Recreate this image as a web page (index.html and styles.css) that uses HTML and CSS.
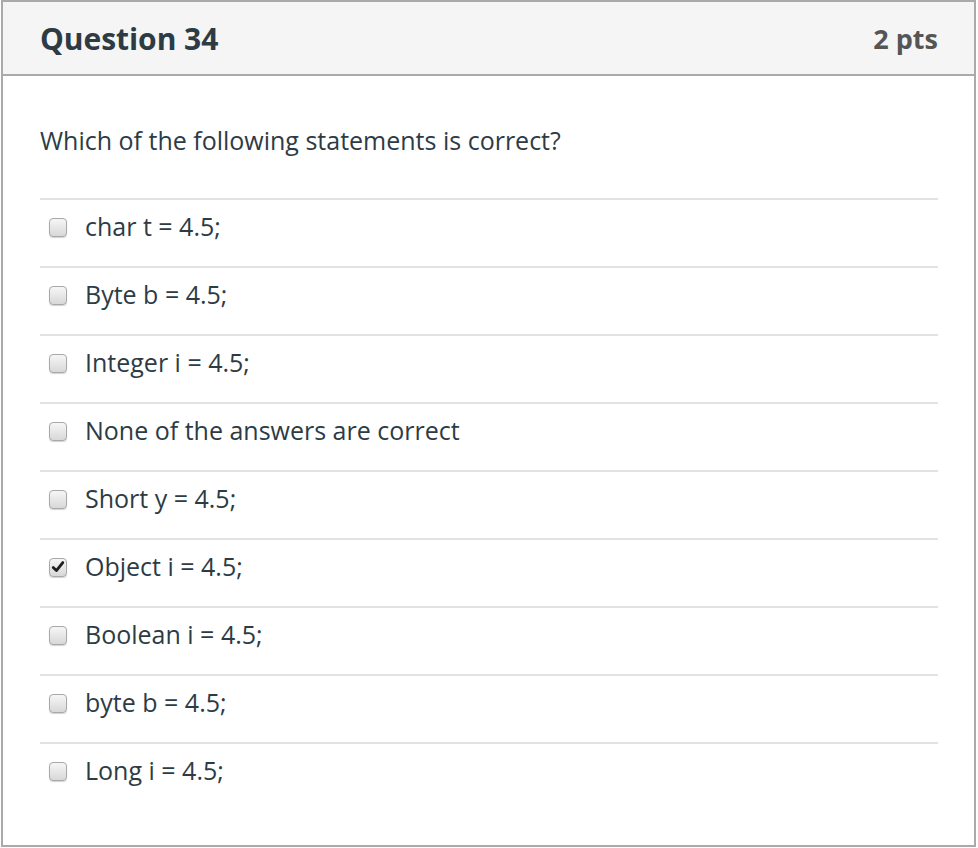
FILE: index.html
```html
<!DOCTYPE html>
<html>
<head>
<meta charset="utf-8">
<link rel="stylesheet" href="styles.css">
</head>
<body>
<div class="question">
  <div class="header">
    <div class="title">Question 34</div>
    <div class="pts">2 pts</div>
  </div>
  <div class="content">
    <div class="text">Which of the following statements is correct?</div>
    <div class="answers">
      <div class="answer"><span class="cb"></span><span class="label">char t = 4.5;</span></div>
      <div class="answer"><span class="cb"></span><span class="label">Byte b = 4.5;</span></div>
      <div class="answer"><span class="cb"></span><span class="label">Integer i = 4.5;</span></div>
      <div class="answer"><span class="cb"></span><span class="label">None of the answers are correct</span></div>
      <div class="answer"><span class="cb"></span><span class="label">Short y = 4.5;</span></div>
      <div class="answer"><span class="cb checked"><svg viewBox="0 0 14 14" width="14" height="14"><path d="M2.2 7.6 L5.4 10.6 L11.8 2.6" fill="none" stroke="#1e1e1e" stroke-width="2.8" stroke-linecap="round" stroke-linejoin="round"/></svg></span><span class="label">Object i = 4.5;</span></div>
      <div class="answer"><span class="cb"></span><span class="label">Boolean i = 4.5;</span></div>
      <div class="answer"><span class="cb"></span><span class="label">byte b = 4.5;</span></div>
      <div class="answer"><span class="cb"></span><span class="label">Long i = 4.5;</span></div>
    </div>
  </div>
</div>
</body>
</html>
```
FILE: styles.css
```css
html, body {
  margin: 0;
  padding: 0;
  background: #fff;
}
body {
  font-family: "Open Sans", "Liberation Sans", sans-serif;
  color: #2d3b45;
}
.question {
  margin-left: 1px;
  width: 975px;
  height: 847px;
  box-sizing: border-box;
  border: 2px solid #aaaaaa;
}
.header {
  height: 74px;
  box-sizing: border-box;
  background: #f5f5f5;
  border-bottom: 2px solid #aaaaaa;
  display: flex;
  justify-content: space-between;
  align-items: center;
  padding: 0 36px 0 37px;
}
.title {
  font-weight: 700;
  font-size: 30px;
  color: #2d3b45;
  letter-spacing: -0.05px;
}
.pts {
  font-weight: 700;
  font-size: 27px;
  color: #555;
}
.content {
  padding: 0 36px 0 37px;
}
.text {
  font-size: 25px;
  padding-top: 49px;
  line-height: 30px;
  padding-bottom: 43px;
}
.answer {
  border-top: 2px solid #e2e2e2;
  height: 66px;
  display: flex;
  align-items: center;
  padding-left: 9px;
}
.cb {
  width: 16px;
  height: 17px;
  border: 1px solid #a8a8a8;
  border-radius: 4px;
  background: linear-gradient(#f6f6f6, #d8d8d8);
  box-shadow: 0 1px 1px rgba(0,0,0,0.18);
  display: flex;
  align-items: center;
  justify-content: center;
  margin-top: -12px;
  flex-shrink: 0;
}
.label {
  margin-left: 18px;
  font-size: 25px;
  line-height: 30px;
  margin-top: -15px;
}
```
